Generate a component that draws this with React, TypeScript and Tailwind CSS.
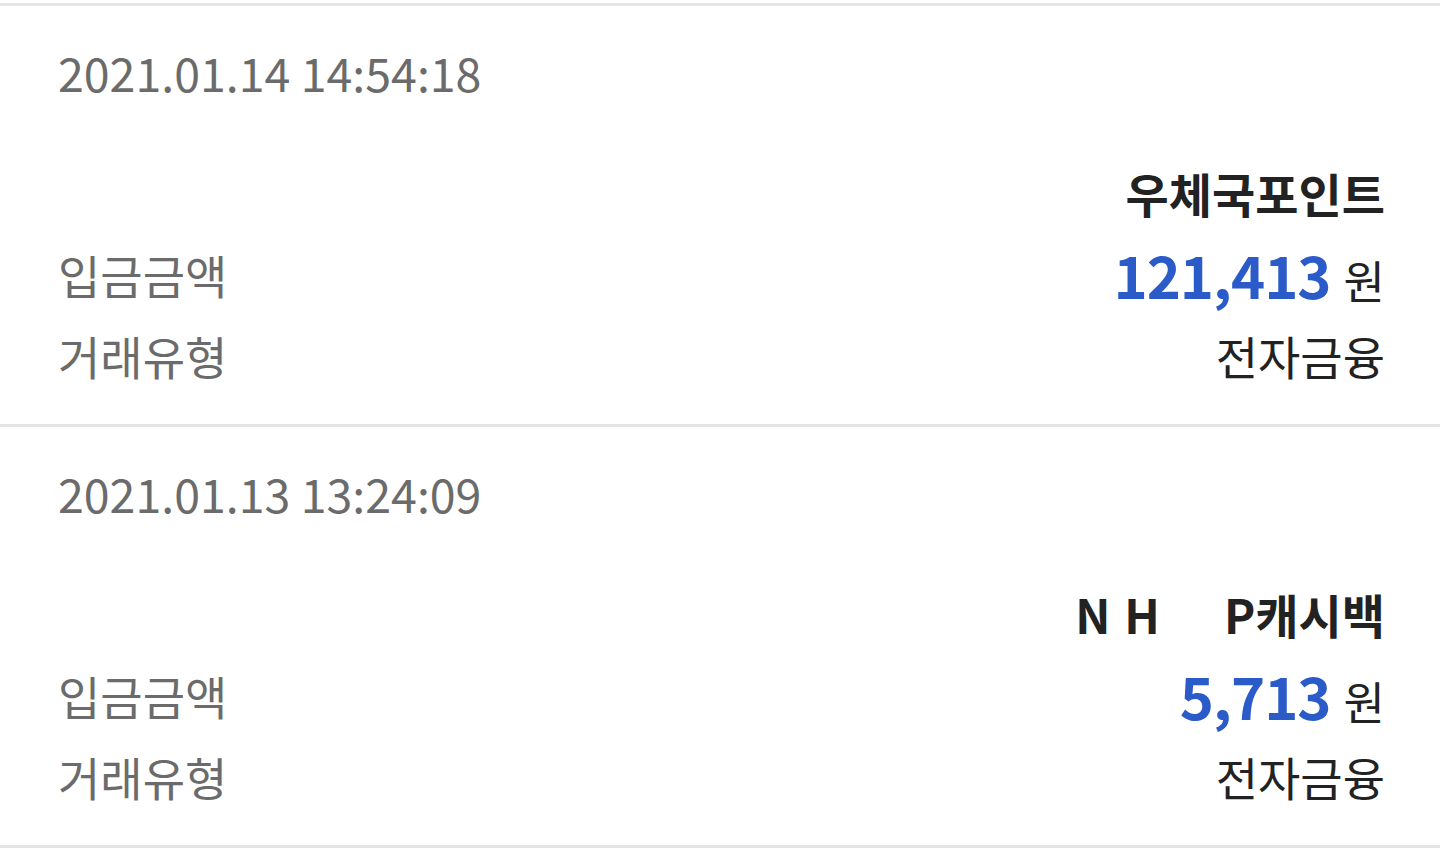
const ROWS = [
  {
    date: "2021.01.14 14:54:18",
    name: <span>우체국포인트</span>,
    amount: "121,413",
    type: "전자금융",
  },
  {
    date: "2021.01.13 13:24:09",
    name: (
      <span>
        <span className="tracking-[14px]">NH</span>
        <span className="ml-[50px]">P캐시백</span>
      </span>
    ),
    amount: "5,713",
    type: "전자금융",
  },
];

export default function App() {
  return (
    <div
      className="w-[1440px] h-[854px] bg-white overflow-hidden"
      style={{ fontFamily: '"Noto Sans CJK KR", "Noto Sans", sans-serif' }}
    >
      <div className="mt-[3px] border-t-[3px] border-[#e6e6e6]" />
      {ROWS.map((r) => (
        <div key={r.date} className="border-b-[3px] border-[#e4e4e4] pl-[58px] pr-[55px] pt-[31px] pb-[28px]">
          <div className="h-[70px] leading-[70px] text-[46.5px] text-[#6b6b6b]">{r.date}</div>
          <div className="mt-[46px]">
            <div className="h-[81px] flex items-center justify-end text-[47px] font-semibold text-[#222]">{r.name}</div>
            <div className="h-[81px] flex items-center justify-between">
              <span className="text-[46px] text-[#6b6b6b]">입금금액</span>
              <span className="flex items-baseline gap-[13px]">
                <span className="text-[58px] font-bold text-[#2a5bc8] tracking-[-1px]">{r.amount}</span>
                <span className="text-[45px] text-[#222]">원</span>
              </span>
            </div>
            <div className="h-[81px] flex items-center justify-between">
              <span className="text-[46px] text-[#6b6b6b]">거래유형</span>
              <span className="text-[46px] text-[#222]">{r.type}</span>
            </div>
          </div>
        </div>
      ))}
    </div>
  );
}
